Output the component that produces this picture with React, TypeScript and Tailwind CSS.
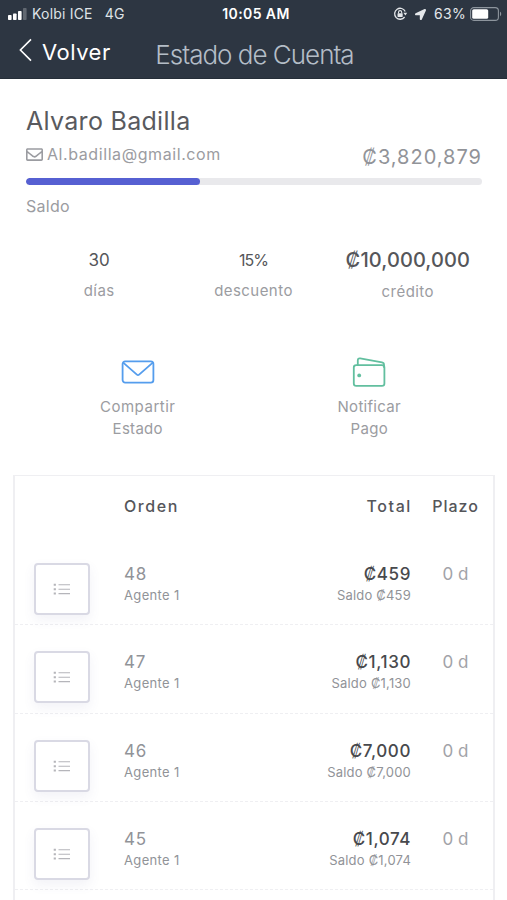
import { FaLocationArrow, FaRegEnvelope } from 'react-icons/fa'

const ORDERS = [
  { id: 48, agent: 'Agente 1', total: '₡459', balance: '₡459', term: '0 d' },
  { id: 47, agent: 'Agente 1', total: '₡1,130', balance: '₡1,130', term: '0 d' },
  { id: 46, agent: 'Agente 1', total: '₡7,000', balance: '₡7,000', term: '0 d' },
  { id: 45, agent: 'Agente 1', total: '₡1,074', balance: '₡1,074', term: '0 d' },
]

function SignalIcon() {
  return (
    <svg width="19" height="12" viewBox="0 0 19 12" fill="#fff" aria-hidden="true">
      <rect y="7" width="3.6" height="5" rx="0.8" />
      <rect x="5" y="5.5" width="3.6" height="6.5" rx="0.8" />
      <rect x="10" y="3" width="3.6" height="9" rx="0.8" />
      <rect x="15" width="3.6" height="12" rx="0.8" opacity="0.25" />
    </svg>
  )
}

function RotationLockIcon() {
  return (
    <svg width="15" height="14" viewBox="0 0 15 14" fill="none" stroke="#e4e7ea" aria-hidden="true">
      <path d="M12.2 4.6A5.5 5.5 0 1 0 11.6 10" strokeWidth="1.3" />
      <path d="M10.4 5.8h3.8l-1.8 2.6z" fill="#e4e7ea" stroke="none" />
      <rect x="4.5" y="6.3" width="5.2" height="3.6" rx="0.6" fill="#e4e7ea" stroke="none" />
      <path d="M5.5 6.5V5.2a1.6 1.6 0 0 1 3.2 0v1.3" strokeWidth="1.1" />
    </svg>
  )
}

function BatteryIcon() {
  return (
    <svg width="32" height="14" viewBox="0 0 32 14" fill="none" aria-hidden="true">
      <rect x="0.6" y="0.6" width="27.8" height="12.8" rx="3.2" stroke="#8d959d" strokeWidth="1.1" />
      <rect x="2.2" y="2.2" width="16" height="9.6" rx="1.6" fill="#fff" />
      <path d="M30 4.8c1.6.6 1.6 3.8 0 4.4z" fill="#8d959d" />
    </svg>
  )
}

function MailIcon() {
  return (
    <svg width="34" height="24" viewBox="0 0 34 24" fill="none" stroke="#559ded" strokeWidth="1.8" aria-hidden="true">
      <rect x="1.6" y="1.4" width="30.8" height="21.2" rx="2.6" />
      <path d="M2.2 2.6 15.9 14.6q1.1 1 2.2 0L31.8 2.6" strokeLinejoin="round" />
    </svg>
  )
}

function WalletIcon() {
  return (
    <svg width="34" height="30" viewBox="0 0 34 30" fill="none" stroke="#62bf9f" strokeWidth="1.8" strokeLinejoin="round" aria-hidden="true">
      <rect x="1.8" y="8.2" width="30.6" height="20.6" rx="2.4" />
      <path d="M5.8 8V3.4q0-2.4 2.4-2L30 5.4q2 .4 2 2.4v3" />
      <circle cx="7.2" cy="18.4" r="1.9" fill="#62bf9f" stroke="none" />
    </svg>
  )
}

function ListIcon() {
  return (
    <svg width="18" height="12" viewBox="0 0 18 12" stroke="#b5b5ba" strokeWidth="1.1" aria-hidden="true">
      <path d="M5.5 1.7H17M5.5 6.2H17M5.5 10.6H17" />
      <path d="M.7 1.7h2.2M.7 6.2h2.2M.7 10.6h2.2" strokeWidth="2" />
    </svg>
  )
}

function Header() {
  return (
    <header className="h-[79px] border-b border-[#252e38] bg-[#2d3642] text-white">
      <div className="grid h-7 grid-cols-[1fr_auto_1fr] items-center pr-[5px] pl-2 text-[14px] leading-none">
        <div className="flex items-center whitespace-pre text-[#dfe3e7]">
          <SignalIcon />
          <span className="ml-[5px] tracking-[0.2px]">Kolbi ICE</span>
          <span className="ml-3 tracking-[0.3px]">4G</span>
        </div>
        <span className="pl-0.5 font-semibold tracking-[0.4px]">10:05 AM</span>
        <div className="flex items-center justify-end text-[#e4e7ea]">
          <RotationLockIcon />
          <FaLocationArrow className="ml-[7px] size-[11px]" />
          <span className="ml-2 tracking-[0.3px]">63%</span>
          <span className="ml-1">
            <BatteryIcon />
          </span>
        </div>
      </div>
      <div className="grid h-[50px] grid-cols-[1fr_auto_1fr]">
        <button type="button" className="flex h-12 items-center pl-[19px] text-[22px]">
          <svg width="13" height="24" viewBox="0 0 13 24" fill="none" stroke="#fff" strokeWidth="1.6" className="mb-1" aria-hidden="true">
            <path d="M12 1.4 1.4 12 12 22.6" />
          </svg>
          <span className="ml-2.5 tracking-[0.5px]">Volver</span>
        </button>
        <h1 className="pt-[3px] pl-0.5 text-[26px] leading-[48px] font-light tracking-[-1px] text-[#b4bdc7]">Estado de Cuenta</h1>
      </div>
    </header>
  )
}

function Account() {
  return (
    <section className="pr-[25px] pl-[26px] pt-6">
      <h2 className="h-9 text-[25px] leading-9 tracking-[0.3px] text-[#595a5e]">Alvaro Badilla</h2>
      <div className="flex h-[39px] items-start justify-between text-[#9b9ca1]">
        <p className="flex h-[30px] items-center gap-1 text-[16px]">
          <FaRegEnvelope className="size-[17px]" />
          <span className="tracking-[0.58px]">Al.badilla@gmail.com</span>
        </p>
        <p className="text-[20px] leading-9 tracking-[1px] text-[#919398]">₡3,820,879</p>
      </div>
      <div className="h-[7px] overflow-hidden rounded-full bg-[#e9e9ec]">
        <div className="h-full w-[174px] rounded-full bg-[#5660d2]" />
      </div>
      <p className="mt-[7px] text-[16px] leading-7 tracking-[0.3px] text-[#9b9ca1]">Saldo</p>
    </section>
  )
}

function Summary() {
  return (
    <section className="mt-[26px] grid grid-cols-3 px-[22px] text-center text-[15px] tracking-[0.45px] text-[#9b9ca1]">
      <div>
        <p className="h-7 text-[17px] leading-7 tracking-normal text-[#55565a]">30</p>
        <p className="mt-[3px] leading-7">días</p>
      </div>
      <div>
        <p className="h-7 text-[16px] leading-7 tracking-[-1px] text-[#55565a]">15%</p>
        <p className="mt-[3px] leading-7">descuento</p>
      </div>
      <div>
        <p className="h-7 text-[20px] leading-7 font-medium tracking-[0.1px] text-[#55565a]">₡10,000,000</p>
        <p className="mt-1 leading-7">crédito</p>
      </div>
    </section>
  )
}

function Actions() {
  return (
    <section className="mt-[44px] grid h-[125px] grid-cols-2 px-[22px] text-center text-[15px] leading-[22px] tracking-[0.5px] text-[#9b9ca1]">
      <button type="button" className="flex flex-col items-center">
        <span className="flex h-[46px] items-start pt-2.5">
          <MailIcon />
        </span>
        <span>Compartir</span>
        <span className="tracking-[0.3px]">Estado</span>
      </button>
      <button type="button" className="flex flex-col items-center tracking-[0.3px]">
        <span className="flex h-[46px] items-start pt-[7px]">
          <WalletIcon />
        </span>
        <span>Notificar</span>
        <span>Pago</span>
      </button>
    </section>
  )
}

function Orders() {
  return (
    <section className="mr-3 ml-[13px] min-h-[425px] border-2 border-t border-b-0 border-[#efeff2]">
      <div className="grid h-[61px] grid-cols-[109px_1fr_75px] items-center pb-0.5 text-[16px] font-medium tracking-[1.6px] text-[#55565a]">
        <span />
        <div className="flex justify-between pr-1.5">
          <span>Orden</span>
          <span>Total</span>
        </div>
        <span className="text-center tracking-[1px]">Plazo</span>
      </div>
      {ORDERS.map((order) => (
        <div
          key={order.id}
          className="grid h-[88.3px] grid-cols-[109px_1fr_75px] items-start border-b border-dashed border-[#efeff2] text-[#919398]"
        >
          <button
            type="button"
            aria-label={`Ver orden ${order.id}`}
            className="mt-[26px] ml-[19px] grid h-[52px] w-14 place-items-center rounded border-2 border-[#d9d9e4] bg-white shadow-[0_5px_12px_rgba(90,90,150,0.08)]"
          >
            <ListIcon />
          </button>
          <div className="flex justify-between pt-[26px] pr-[7px]">
            <div>
              <p className="text-[17px] leading-[23px] tracking-[0.8px]">{order.id}</p>
              <p className="text-[13px] leading-[18px] tracking-[0.35px]">{order.agent}</p>
            </div>
            <div className="text-right">
              <p className="text-[17px] leading-[23px] font-medium tracking-[0.6px] text-[#48494d]">{order.total}</p>
              <p className="text-[13px] leading-[18px] tracking-[0.2px]">Saldo {order.balance}</p>
            </div>
          </div>
          <span className="pt-[26px] text-center text-[17px] leading-[23px] text-[#a2a3a8]">{order.term}</span>
        </div>
      ))}
    </section>
  )
}

export default function App() {
  return (
    <main className="h-[900px] w-[507px] overflow-hidden bg-white font-['Inter','Liberation_Sans',sans-serif]">
      <Header />
      <Account />
      <Summary />
      <Actions />
      <Orders />
    </main>
  )
}
